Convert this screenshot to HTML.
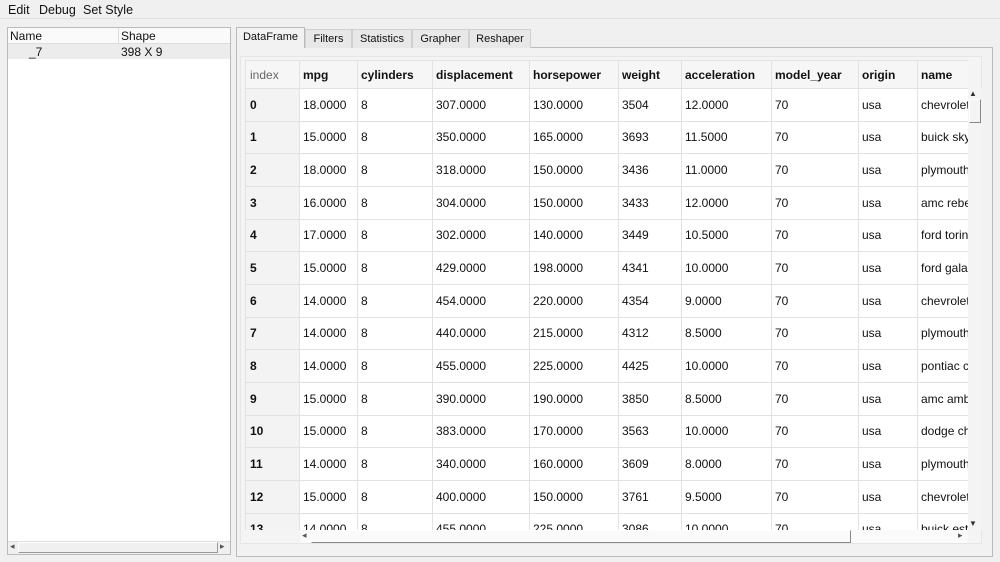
<!DOCTYPE html>
<html><head><style>
*{box-sizing:border-box;margin:0;padding:0}
body{width:1000px;height:562px;background:#f0f0f0;font-family:"Liberation Sans",sans-serif;font-size:12px;color:#111;position:relative;overflow:hidden}
.abs{position:absolute}
.menu span{position:absolute;top:3px;font-size:12.5px}
.tab{position:absolute;top:29px;height:19px;border:1px solid #d0d0d0;border-bottom:none;background:#e8e8e8;font-size:11px;text-align:center;line-height:18px}
.clip{position:absolute;left:245px;top:60px;width:723px;height:470px;overflow:hidden;background:#fafafa}
table{border-collapse:collapse;table-layout:fixed;background:#fff;width:732px}
td{height:32.67px;border:1px solid #e2e2e2;padding-left:3px;white-space:nowrap;overflow:hidden;font-size:12px}
tr.h td{height:28px;font-weight:bold;background:#f6f6f6}
td.i{font-weight:bold;background:#f3f3f3;padding-left:4px}
tr.h td.i{color:#666;font-weight:normal}
</style></head><body>
<div class="menu"><span style="left:8px">Edit</span><span style="left:39px">Debug</span><span style="left:83px">Set Style</span></div>
<div class="abs" style="left:0;top:18px;width:1000px;height:1px;background:#e0e0e0"></div>
<div class="abs" style="left:7px;top:27px;width:224px;height:528px;background:#fff;border:1px solid #bbb"></div>
<div class="abs" style="left:8px;top:28px;width:222px;height:16px;background:#fafafa;border-bottom:1px solid #ddd"></div>
<div class="abs" style="left:118px;top:28px;width:1px;height:16px;background:#ddd"></div>
<div class="abs" style="left:10px;top:29px;font-size:12px">Name</div>
<div class="abs" style="left:121px;top:29px;font-size:12px">Shape</div>
<div class="abs" style="left:8px;top:44px;width:222px;height:15px;background:#ececec"></div>
<div class="abs" style="left:29px;top:45px">_7</div>
<div class="abs" style="left:121px;top:45px">398 X 9</div>
<div class="abs" style="left:8px;top:541px;width:222px;height:13px;background:#f0f0f0;border-top:1px solid #ddd"></div>
<div class="abs" style="left:10px;top:541px;font-size:9px;color:#555">◂</div>
<div class="abs" style="left:220px;top:541px;font-size:9px;color:#555">▸</div>
<div class="abs" style="left:18px;top:542px;width:200px;height:11px;border:1px solid #999;border-top-color:#fff;border-left-color:#fff"></div>
<div class="abs" style="left:236px;top:47px;width:757px;height:510px;border:1px solid #bbb;background:#f2f2f2"></div>
<div class="tab" style="left:236px;width:69px;top:27px;height:21px;background:#f2f2f2;border-color:#bbb">DataFrame</div>
<div class="tab" style="left:305px;width:47px">Filters</div>
<div class="tab" style="left:352px;width:60px">Statistics</div>
<div class="tab" style="left:412px;width:57px">Grapher</div>
<div class="tab" style="left:469px;width:62px">Reshaper</div>
<div class="abs" style="left:240px;top:56px;width:742px;height:488px;background:#f4f4f4;border:1px solid #e6e6e6"></div>
<div class="clip"><table>
<colgroup><col style="width:54px"><col style="width:58px"><col style="width:75px"><col style="width:97px"><col style="width:89px"><col style="width:63px"><col style="width:90px"><col style="width:87px"><col style="width:59px"><col style="width:60px"></colgroup>
<tr class="h"><td class="i">index</td><td>mpg</td><td>cylinders</td><td>displacement</td><td>horsepower</td><td>weight</td><td>acceleration</td><td>model_year</td><td>origin</td><td>name</td></tr>
<tr><td class="i">0</td><td>18.0000</td><td>8</td><td>307.0000</td><td>130.0000</td><td>3504</td><td>12.0000</td><td>70</td><td>usa</td><td>chevrolet</td></tr>
<tr><td class="i">1</td><td>15.0000</td><td>8</td><td>350.0000</td><td>165.0000</td><td>3693</td><td>11.5000</td><td>70</td><td>usa</td><td>buick skyla</td></tr>
<tr><td class="i">2</td><td>18.0000</td><td>8</td><td>318.0000</td><td>150.0000</td><td>3436</td><td>11.0000</td><td>70</td><td>usa</td><td>plymouth</td></tr>
<tr><td class="i">3</td><td>16.0000</td><td>8</td><td>304.0000</td><td>150.0000</td><td>3433</td><td>12.0000</td><td>70</td><td>usa</td><td>amc rebel</td></tr>
<tr><td class="i">4</td><td>17.0000</td><td>8</td><td>302.0000</td><td>140.0000</td><td>3449</td><td>10.5000</td><td>70</td><td>usa</td><td>ford torino</td></tr>
<tr><td class="i">5</td><td>15.0000</td><td>8</td><td>429.0000</td><td>198.0000</td><td>4341</td><td>10.0000</td><td>70</td><td>usa</td><td>ford galax</td></tr>
<tr><td class="i">6</td><td>14.0000</td><td>8</td><td>454.0000</td><td>220.0000</td><td>4354</td><td>9.0000</td><td>70</td><td>usa</td><td>chevrolet</td></tr>
<tr><td class="i">7</td><td>14.0000</td><td>8</td><td>440.0000</td><td>215.0000</td><td>4312</td><td>8.5000</td><td>70</td><td>usa</td><td>plymouth</td></tr>
<tr><td class="i">8</td><td>14.0000</td><td>8</td><td>455.0000</td><td>225.0000</td><td>4425</td><td>10.0000</td><td>70</td><td>usa</td><td>pontiac ca</td></tr>
<tr><td class="i">9</td><td>15.0000</td><td>8</td><td>390.0000</td><td>190.0000</td><td>3850</td><td>8.5000</td><td>70</td><td>usa</td><td>amc amba</td></tr>
<tr><td class="i">10</td><td>15.0000</td><td>8</td><td>383.0000</td><td>170.0000</td><td>3563</td><td>10.0000</td><td>70</td><td>usa</td><td>dodge cha</td></tr>
<tr><td class="i">11</td><td>14.0000</td><td>8</td><td>340.0000</td><td>160.0000</td><td>3609</td><td>8.0000</td><td>70</td><td>usa</td><td>plymouth</td></tr>
<tr><td class="i">12</td><td>15.0000</td><td>8</td><td>400.0000</td><td>150.0000</td><td>3761</td><td>9.5000</td><td>70</td><td>usa</td><td>chevrolet</td></tr>
<tr><td class="i">13</td><td>14.0000</td><td>8</td><td>455.0000</td><td>225.0000</td><td>3086</td><td>10.0000</td><td>70</td><td>usa</td><td>buick esta</td></tr>
</table></div>
<div class="abs" style="left:968px;top:88px;width:14px;height:442px;background:#f4f4f4"></div>
<div class="abs" style="left:969px;top:89px;font-size:8px;color:#333">▲</div>
<div class="abs" style="left:969px;top:99px;width:12px;height:24px;border:1px solid #888;border-top-color:#fff;border-left-color:#fff"></div>
<div class="abs" style="left:969px;top:519px;font-size:8px;color:#333">▼</div>
<div class="abs" style="left:300px;top:530px;width:668px;height:13px;background:#fafafa"></div>
<div class="abs" style="left:302px;top:530px;font-size:9px;color:#555">◂</div>
<div class="abs" style="left:311px;top:530px;width:540px;height:13px;border:1px solid #888;border-top-color:#fff;border-left-color:#fff"></div>
<div class="abs" style="left:958px;top:530px;font-size:9px;color:#555">▸</div>
</body></html>
